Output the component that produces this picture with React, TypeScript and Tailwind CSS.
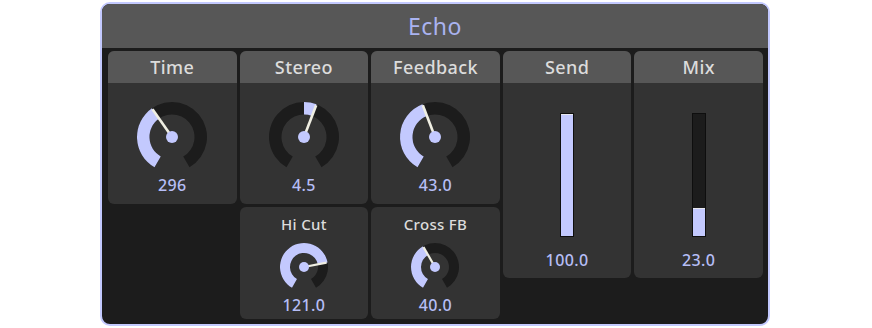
import React from "react";

const LAV = "#c3c9fe";
const TRACK = "#1c1c1c";
const PTR = "#efeee2";

function pt(cx: number, cy: number, r: number, deg: number) {
  const a = (deg * Math.PI) / 180;
  return [cx + r * Math.sin(a), cy - r * Math.cos(a)];
}

function sector(cx: number, cy: number, ro: number, ri: number, a0: number, a1: number) {
  if (a1 < a0) [a0, a1] = [a1, a0];
  const large = a1 - a0 > 180 ? 1 : 0;
  const [x0, y0] = pt(cx, cy, ro, a0);
  const [x1, y1] = pt(cx, cy, ro, a1);
  const [x2, y2] = pt(cx, cy, ri, a1);
  const [x3, y3] = pt(cx, cy, ri, a0);
  return `M${x0} ${y0} A${ro} ${ro} 0 ${large} 1 ${x1} ${y1} L${x2} ${y2} A${ri} ${ri} 0 ${large} 0 ${x3} ${y3} Z`;
}

function Knob({ size, angle, from = -150 }: { size: "big" | "small"; angle: number; from?: number }) {
  const big = size === "big";
  const s = big ? 76 : 52;
  const c = s / 2;
  const ro = big ? 35 : 24;
  const ri = big ? 22.5 : 14;
  const dot = big ? 6 : 5;
  const [px, py] = pt(c, c, ro - 1, angle);
  return (
    <svg width={s} height={s} viewBox={`0 0 ${s} ${s}`}>
      <path d={sector(c, c, ro, ri, -150, 150)} fill={TRACK} />
      {Math.abs(angle - from) > 0.1 && <path d={sector(c, c, ro, ri, from, angle)} fill={LAV} />}
      <line x1={c} y1={c} x2={px} y2={py} stroke={PTR} strokeWidth={big ? 2.6 : 2.2} />
      <circle cx={c} cy={c} r={dot} fill={LAV} />
    </svg>
  );
}

function Header({ title }: { title: string }) {
  return (
    <div className="h-[32px] bg-[#575757] rounded-t-[6px] flex items-center justify-center text-[18px] font-medium tracking-[0.4px] text-[#dcdcdc] leading-none">
      {title}
    </div>
  );
}

function BigKnobPanel({ title, value, angle, from }: { title: string; value: string; angle: number; from?: number }) {
  return (
    <div className="h-[153px] flex flex-col rounded-[6px] bg-[#333333]">
      <Header title={title} />
      <div className="flex-1 flex flex-col items-center pt-[16px]">
        <Knob size="big" angle={angle} from={from} />
        <div className="text-[16px] leading-[20px] font-medium tracking-[0.4px] text-[#b6bef6]">{value}</div>
      </div>
    </div>
  );
}

function SmallKnobPanel({ title, value, angle }: { title: string; value: string; angle: number }) {
  return (
    <div className="h-[112px] flex flex-col items-center rounded-[6px] bg-[#333333] pt-[7px]">
      <div className="text-[15px] leading-[20px] font-medium tracking-[0.3px] text-[#dcdcdc]">{title}</div>
      <div className="mt-[7px]">
        <Knob size="small" angle={angle} />
      </div>
      <div className="mt-[2px] text-[16px] leading-[20px] font-medium tracking-[0.4px] text-[#b6bef6]">{value}</div>
    </div>
  );
}

function SliderPanel({ title, value, pct }: { title: string; value: string; pct: number }) {
  return (
    <div className="h-[227px] flex flex-col rounded-[6px] bg-[#333333]">
      <Header title={title} />
      <div className="flex-1 flex flex-col items-center pt-[30px]">
        <div className="w-[14px] h-[124px] border border-[#0e0e0e] bg-[#1c1c1c] flex flex-col justify-end">
          <div className="w-full bg-[#c3c9fe] border-t border-[#e8e8ee]" style={{ height: `${pct}%` }} />
        </div>
        <div className="mt-[13px] text-[16px] leading-[20px] font-medium tracking-[0.4px] text-[#b6bef6]">{value}</div>
      </div>
    </div>
  );
}

export default function App() {
  return (
    <div className="w-[872px] h-[328px] bg-white pt-[2px] font-['Noto_Sans','Open_Sans',sans-serif]">
      <div className="ml-[100px] w-[670px] h-[324px] rounded-[10px] border-2 border-[#c3c9fe] bg-[#1c1c1c] overflow-hidden flex flex-col">
        <div className="h-[44px] shrink-0 bg-[#575757] flex items-center justify-center text-[23px] tracking-[0.5px] text-[#aab3f0]">
          Echo
        </div>
        <div className="flex gap-[3px] pl-[6px] pr-[5px] pt-[3px]">
          <div className="flex-1 basis-0 flex flex-col gap-[3px]">
            <BigKnobPanel title="Time" value="296" angle={-35} />
          </div>
          <div className="flex-1 basis-0 flex flex-col gap-[3px]">
            <BigKnobPanel title="Stereo" value="4.5" angle={21} from={0} />
            <SmallKnobPanel title="Hi Cut" value="121.0" angle={79} />
          </div>
          <div className="flex-1 basis-0 flex flex-col gap-[3px]">
            <BigKnobPanel title="Feedback" value="43.0" angle={-21} />
            <SmallKnobPanel title="Cross FB" value="40.0" angle={-30} />
          </div>
          <div className="flex-1 basis-0 flex flex-col">
            <SliderPanel title="Send" value="100.0" pct={100} />
          </div>
          <div className="flex-1 basis-0 flex flex-col">
            <SliderPanel title="Mix" value="23.0" pct={23} />
          </div>
        </div>
      </div>
    </div>
  );
}
